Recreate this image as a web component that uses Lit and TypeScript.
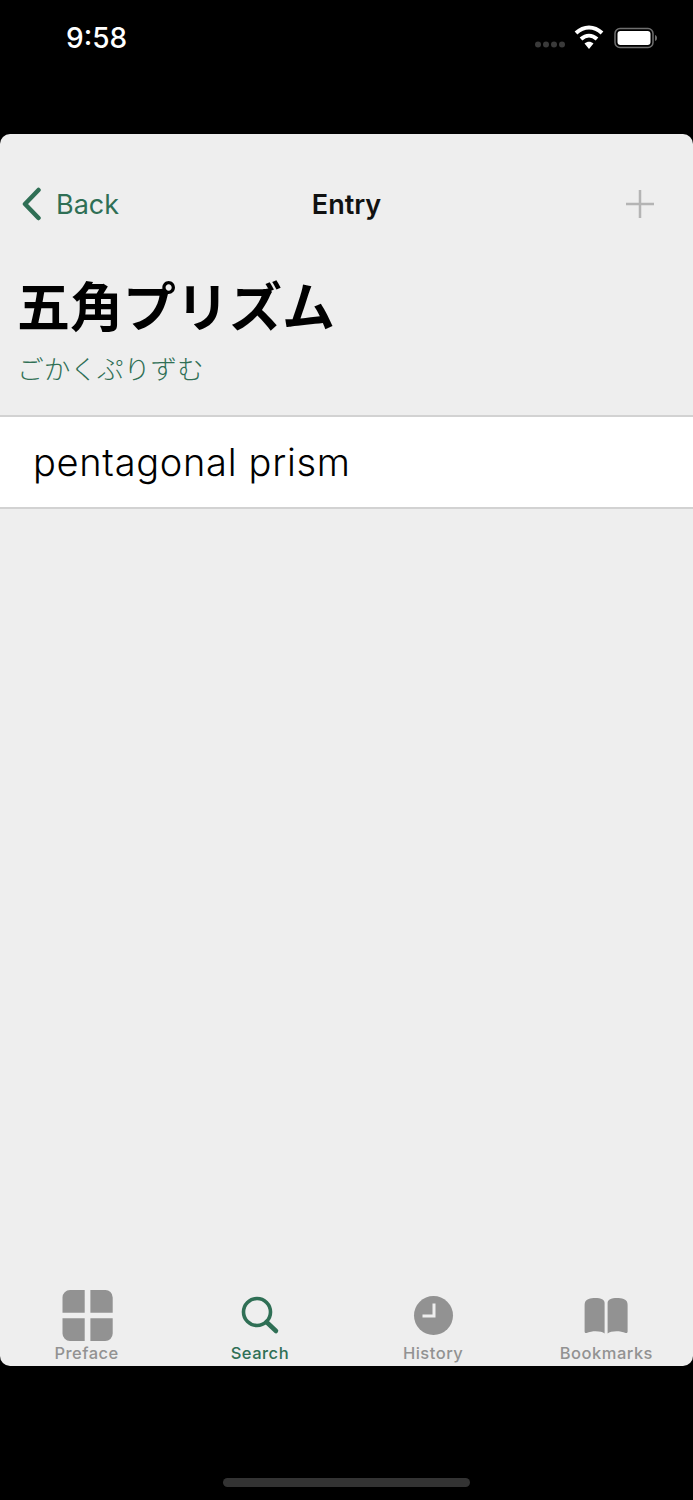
import { LitElement, html, css, svg } from 'lit';
import { customElement } from 'lit/decorators.js';

const GREEN = '#2f6f55';
const GREY = '#929292';

const tabs = [
  {
    label: 'Preface',
    active: false,
    icon: svg`<path fill="${GREY}" d="M13 0h14.700v22.700H5.500V7.500A7.500 7.500 0 0 1 13 0zM33.400 0H48a7.500 7.500 0 0 1 7.700 7.500v15.200H33.400zM5.500 28.300h22.200V51H13a7.500 7.500 0 0 1-7.500-7.500zM33.400 28.300h22.300v15.200a7.500 7.500 0 0 1-7.700 7.500H33.400z"/>`,
  },
  {
    label: 'Search',
    active: true,
    icon: svg`<circle cx="27" cy="22" r="13.500" fill="none" stroke="${GREEN}" stroke-width="3.600"/><path d="M36.500 32 L46 41" fill="none" stroke="${GREEN}" stroke-width="4.500" stroke-linecap="round"/>`,
  },
  {
    label: 'History',
    active: false,
    icon: svg`<circle cx="30.500" cy="25.500" r="19.500" fill="${GREY}"/><path d="M31 13.500V26H19.500" fill="none" stroke="#eeeeee" stroke-width="3"/>`,
  },
  {
    label: 'Bookmarks',
    active: false,
    icon: svg`<path fill="${GREY}" d="M8.600 15c0-3 1-5 4-6 4-1.300 10-1.500 14 .5 1.300.7 2 2 2 3.500v30.500c-3-2.500-12-3-18-.5-1 .4-2-.2-2-1.500zM51.600 15c0-3-1-5-4-6-4-1.300-10-1.500-14 .5-1.300.7-2 2-2 3.500v30.500c3-2.500 12-3 18-.5 1 .4 2-.2 2-1.500z"/>`,
  },
];

@customElement('app-root')
export class AppRoot extends LitElement {
  static styles = css`
    :host {
      display: block;
      font-family: Inter, 'Liberation Sans', sans-serif;
    }
    .screen {
      width: 693px;
      height: 1500px;
      background: #000;
      display: flex;
      flex-direction: column;
    }
    .status {
      height: 134px;
      flex: none;
      box-sizing: border-box;
      padding: 22px 36px 0 66px;
      display: flex;
      justify-content: space-between;
      align-items: flex-start;
    }
    .time {
      color: #fff;
      font-size: 28px;
      font-weight: 500;
      line-height: 32px;
    }
    .status-icons {
      display: block;
    }
    .card {
      flex: none;
      height: 1232px;
      background: #eeeeee;
      border-radius: 10px;
      display: flex;
      flex-direction: column;
    }
    .nav {
      height: 50px;
      margin-top: 45px;
      flex: none;
      display: grid;
      grid-template-columns: 1fr auto 1fr;
      align-items: center;
      padding: 0 20px;
    }
    .back {
      display: flex;
      align-items: center;
      gap: 14px;
      color: #2f6f55;
      font-size: 27px;
    }
    .nav-title {
      font-size: 27px;
      font-weight: 600;
      color: #111;
    }
    .add {
      justify-self: end;
      display: block;
      margin-right: 18px;
    }
    .heading {
      padding: 0 17px;
      height: 186px;
      flex: none;
      box-sizing: border-box;
      font-family: 'Noto Sans CJK JP', sans-serif;
    }
    h1 {
      margin: 39px 0 0;
      font-size: 53px;
      line-height: 72px;
      font-weight: 700;
      color: #000;
    }
    .reading {
      font-size: 26.700px;
      line-height: 38px;
      color: #2f6f55;
      font-weight: 300;
      margin-top: 9px;
    }
    .row {
      flex: none;
      height: 90px;
      background: #fff;
      border-top: 2px solid #d2d2d2;
      border-bottom: 2px solid #d2d2d2;
      padding-left: 33px;
      display: flex;
      align-items: center;
      font-size: 38px;
      font-weight: 300;
      letter-spacing: 0.7px;
      color: #000;
    }
    .spacer {
      flex: 1;
    }
    .tabs {
      flex: none;
      display: grid;
      grid-template-columns: repeat(4, 1fr);
      height: 76px;
      padding-top: 4px;
    }
    .tab {
      display: flex;
      flex-direction: column;
      align-items: center;
      font-size: 16.500px;
      font-weight: 500;
      letter-spacing: 0.5px;
      color: #929292;
      line-height: 20px;
    }
    .tab.active {
      color: #2f6f55;
    }
    .tab svg {
      display: block;
    }
    .tab span {
      margin-top: 1px;
    }
    .bottom {
      flex: 1;
      display: flex;
      justify-content: center;
      padding-top: 112px;
    }
    .home {
      width: 247px;
      height: 9px;
      border-radius: 5px;
      background: #333;
    }
  `;

  render() {
    return html`
      <div class="screen">
        <div class="status">
          <div class="time">9:58</div>
          <svg class="status-icons" width="124" height="32" viewBox="0 0 124 32">
            <g fill="#3a3a3a">
              <circle cx="5" cy="22.500" r="3"/><circle cx="13" cy="22.500" r="3"/>
              <circle cx="21" cy="22.500" r="3"/><circle cx="29" cy="22.500" r="3"/>
            </g>
            <g fill="none" stroke="#fff" stroke-width="4">
              <path d="M43 11c8-7.500 18-7.500 26 0"/>
              <path d="M48 17c5-4.500 11-4.500 16 0"/>
            </g>
            <path d="M51.500 21.500c3-2.500 6-2.500 9 0L56 27z" fill="#fff"/>
            <rect x="82" y="6.500" width="38" height="19" rx="5" fill="none" stroke="#6f6f6f" stroke-width="1.500"/>
            <rect x="84.500" y="9" width="33" height="14" rx="3" fill="#fff"/>
            <path d="M122 13c1.500.5 2 1.500 2 3s-.5 2.500-2 3z" fill="#6f6f6f"/>
          </svg>
        </div>
        <div class="card">
          <div class="nav">
            <div class="back">
              <svg width="22" height="34" viewBox="0 0 22 34">
                <path d="M18.500 3 L5 17 L18.500 31" fill="none" stroke="${GREEN}" stroke-width="4.500" stroke-linecap="round" stroke-linejoin="round"/>
              </svg>
              <span>Back</span>
            </div>
            <div class="nav-title">Entry</div>
            <svg class="add" width="30" height="30" viewBox="0 0 30 30">
              <path d="M15 1v28M1 15h28" stroke="#b4b4b4" stroke-width="2.500" fill="none"/>
            </svg>
          </div>
          <div class="heading">
            <h1>五角プリズム</h1>
            <div class="reading">ごかくぷりずむ</div>
          </div>
          <div class="row">pentagonal prism</div>
          <div class="spacer"></div>
          <div class="tabs">
            ${tabs.map(
              t => html`
                <div class="tab ${t.active ? 'active' : ''}">
                  <svg width="60" height="52" viewBox="0 0 60 52">${t.icon}</svg>
                  <span>${t.label}</span>
                </div>
              `
            )}
          </div>
        </div>
        <div class="bottom"><div class="home"></div></div>
      </div>
    `;
  }
}
